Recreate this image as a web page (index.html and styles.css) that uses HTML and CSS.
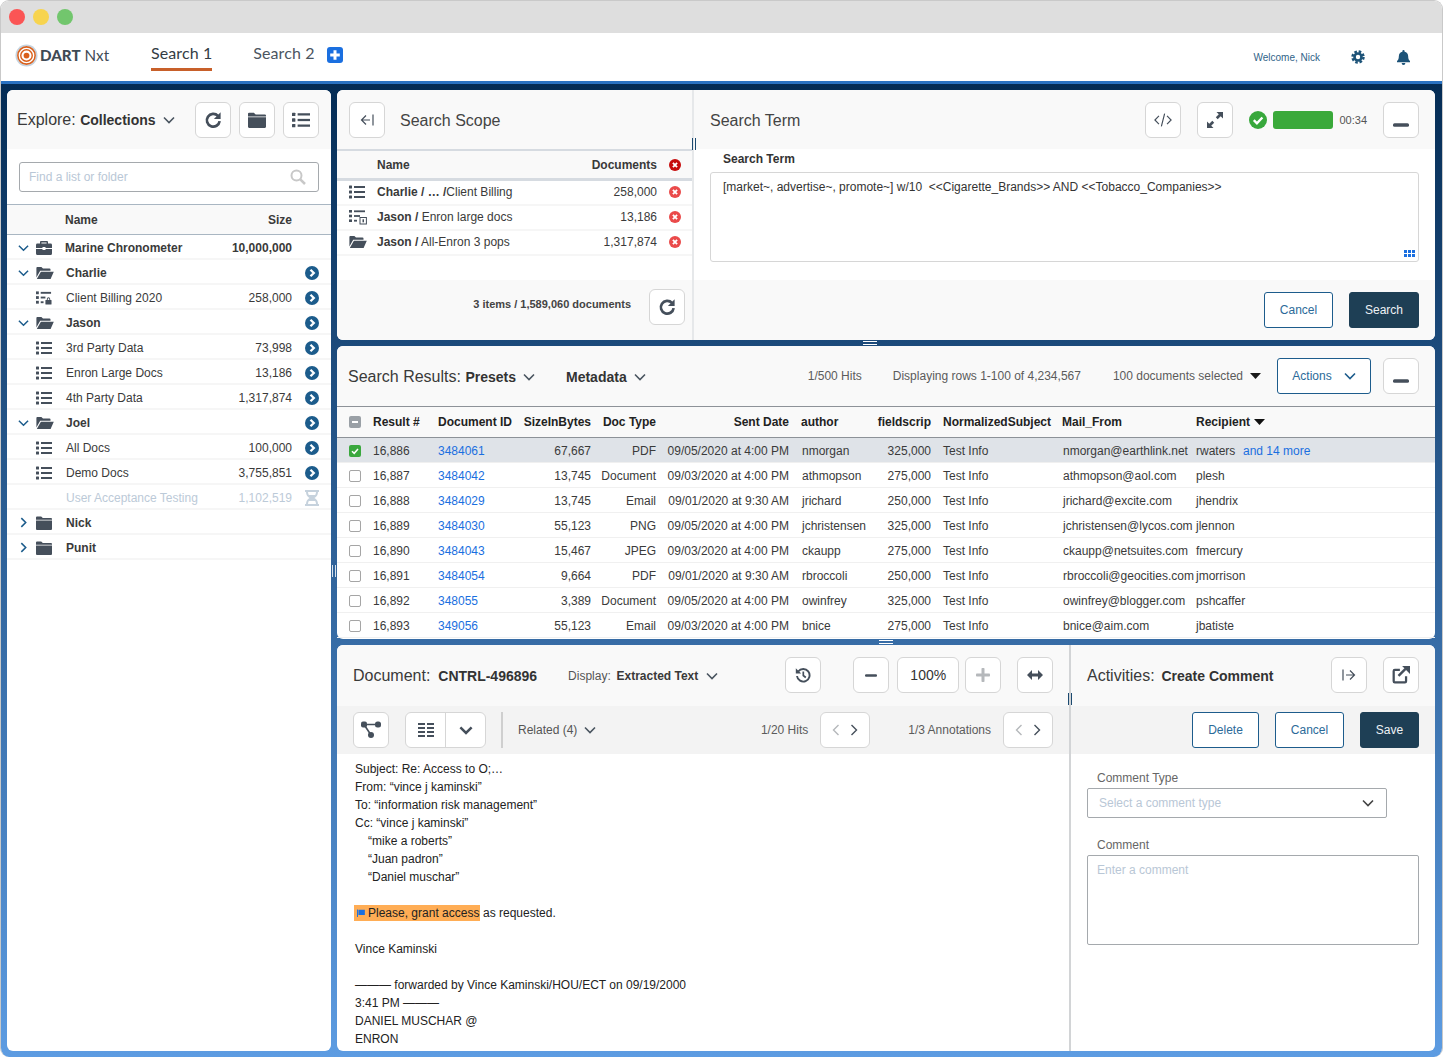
FILE: index.html
```html
<!DOCTYPE html>
<html lang="en">
<head>
<meta charset="utf-8">
<title>DART Nxt</title>
<link rel="stylesheet" href="styles.css">
</head>
<body>
<svg class="sprite" xmlns="http://www.w3.org/2000/svg">
  <symbol id="redo" viewBox="0 0 16 16"><path d="M12.4 4.3A5.700 5.700 0 1 0 13.900 9" fill="none" stroke="currentColor" stroke-width="2.400"/><path d="M14.800 1.200v6h-6z" fill="currentColor"/></symbol>
  <symbol id="list" viewBox="0 0 16 16"><g fill="currentColor"><rect x="0" y="1.500" width="3" height="3" rx=".5"/><rect x="0" y="6.500" width="3" height="3" rx=".5"/><rect x="0" y="11.500" width="3" height="3" rx=".5"/><rect x="5" y="2" width="11" height="2"/><rect x="5" y="7" width="11" height="2"/><rect x="5" y="12" width="11" height="2"/></g></symbol>
  <symbol id="list-lock" viewBox="0 0 17 16"><g fill="currentColor"><rect x="0" y="1" width="3" height="3"/><rect x="0" y="6" width="3" height="3"/><rect x="0" y="11" width="3" height="3"/><rect x="5" y="1.500" width="11" height="2"/><rect x="5" y="6.500" width="5" height="2"/><rect x="5" y="11.500" width="3" height="2"/><rect x="10" y="10" width="6.500" height="5" rx=".6"/><path d="M11.500 10.500V9a1.800 1.800 0 0 1 3.600 0v1.500h-1V9a.8.800 0 0 0-1.600 0v1.500z"/></g></symbol>
  <symbol id="list-query" viewBox="0 0 18 16"><g fill="currentColor"><rect x="0" y="1" width="3" height="2.600"/><rect x="0" y="5.700" width="3" height="2.600"/><rect x="0" y="10.400" width="3" height="2.600"/><rect x="5" y="1.400" width="11" height="1.800"/><rect x="5" y="6.100" width="6" height="1.800"/><rect x="5" y="10.800" width="3" height="1.800"/></g><rect x="11" y="8.500" width="6.400" height="6.500" fill="none" stroke="currentColor"/><rect x="13.500" y="10.300" width="1.500" height="3" fill="currentColor"/></symbol>
  <symbol id="folder" viewBox="0 0 16 16"><path fill="currentColor" d="M1 1.500h4.200L6.800 3H15a1 1 0 0 1 1 1v.8H0V2.500a1 1 0 0 1 1-1zM0 5.600h16V14a1 1 0 0 1-1 1H1a1 1 0 0 1-1-1z"/></symbol>
  <symbol id="folder-open" viewBox="0 0 18 16"><path fill="currentColor" d="M1 2h4.400L7 3.600h6.500a1 1 0 0 1 1 1v1.200H4.200L.4 12.600V3a1 1 0 0 1 .6-1zM4.900 6.800H17.800L14.600 14H.8z"/></symbol>
  <symbol id="briefcase" viewBox="0 0 16 16"><path fill="currentColor" d="M5 1h6a1 1 0 0 1 1 1v1.500h2.600a1.400 1.400 0 0 1 1.400 1.400V8H9.500V7h-3v1H0V4.900a1.400 1.400 0 0 1 1.400-1.400H4V2a1 1 0 0 1 1-1zm.4 1.400V3.500h5.200V2.400zM0 9h6.500v1h3V9H16v4.500a1.500 1.500 0 0 1-1.500 1.500h-13A1.500 1.500 0 0 1 0 13.500z"/></symbol>
  <symbol id="go" viewBox="0 0 14 14"><circle cx="7" cy="7" r="7" fill="#1c5c8c"/><path d="M5.500 3.700 8.800 7l-3.300 3.300" fill="none" stroke="#fff" stroke-width="2.300"/></symbol>
  <symbol id="rm" viewBox="0 0 12 12"><circle cx="6" cy="6" r="6" fill="currentColor"/><path d="M3.900 3.900l4.200 4.200M8.100 3.900l-4.200 4.200" stroke="#fff" stroke-width="1.800"/></symbol>
  <symbol id="hourglass" viewBox="0 0 14 16"><path fill="currentColor" d="M0 0h14v2h-1c0 3-1.500 4.800-3.500 6C11.500 9.200 13 11 13 14h1v2H0v-2h1c0-3 1.500-4.800 3.500-6C2.500 6.800 1 5 1 2H0zm3 2c0 1 .3 2 .8 3h6.400c.5-1 .8-2 .8-3zM3.800 11c-.5 1-.8 2-.8 3h8c0-1-.3-2-.8-3z"/></symbol>
  <symbol id="chev-d" viewBox="0 0 12 8"><path d="M1 1.500l5 5 5-5" fill="none" stroke="currentColor" stroke-width="1.600"/></symbol>
  <symbol id="chev-d2" viewBox="0 0 12 8"><path d="M1 1.200l5 5 5-5" fill="none" stroke="currentColor" stroke-width="2.200"/></symbol>
  <symbol id="chev-r" viewBox="0 0 8 12"><path d="M1.500 1l5 5-5 5" fill="none" stroke="currentColor" stroke-width="1.800"/></symbol>
  <symbol id="ang-l" viewBox="0 0 8 12"><path d="M6.500 1l-5 5 5 5" fill="none" stroke="currentColor" stroke-width="1.400"/></symbol>
  <symbol id="ang-r" viewBox="0 0 8 12"><path d="M1.500 1l5 5-5 5" fill="none" stroke="currentColor" stroke-width="1.400"/></symbol>
  <symbol id="search" viewBox="0 0 16 16"><circle cx="6.500" cy="6.500" r="5" fill="none" stroke="currentColor" stroke-width="2"/><path d="M10.300 10.300 15 15" stroke="currentColor" stroke-width="2.500"/></symbol>
  <symbol id="back" viewBox="0 0 14 12"><path d="M6 1.500 1.500 6 6 10.500M1.500 6H10" fill="none" stroke="currentColor" stroke-width="1.200"/><path d="M13 .5v11" stroke="currentColor" stroke-width="1.200"/></symbol>
  <symbol id="fwd" viewBox="0 0 14 12"><path d="M8 1.500 12.500 6 8 10.500M12.500 6H4" fill="none" stroke="currentColor" stroke-width="1.200"/><path d="M1 .5v11" stroke="currentColor" stroke-width="1.200"/></symbol>
  <symbol id="code" viewBox="0 0 20 16"><path d="M5.500 3.500 1 8l4.500 4.500M14.500 3.500 19 8l-4.500 4.500M11.800 1 8.200 15" fill="none" stroke="currentColor" stroke-width="1.300"/></symbol>
  <symbol id="expand" viewBox="0 0 16 16"><path fill="currentColor" d="M9.500 0H16v6.500l-2.300-2.300-3 3-1.900-1.900 3-3zM0 9.500l2.300 2.300 3-3 1.900 1.900-3 3L6.500 16H0z"/></symbol>
  <symbol id="check" viewBox="0 0 18 18"><circle cx="9" cy="9" r="9" fill="#38a83c"/><path d="M4.800 9.200 7.900 12.300 13.400 6.500" fill="none" stroke="#fff" stroke-width="2.400"/></symbol>
  <symbol id="minus" viewBox="0 0 16 4"><rect width="16" height="3.600" y=".2" rx="1.500" fill="currentColor"/></symbol>
  <symbol id="plus-b" viewBox="0 0 14 14"><rect y="5.500" width="14" height="3" rx=".8" fill="currentColor"/><rect x="5.500" width="3" height="14" rx=".8" fill="currentColor"/></symbol>
  <symbol id="arrows-h" viewBox="0 0 16 10"><path fill="currentColor" d="M5 0v3.500h6V0l5 5-5 5V6.500H5V10L0 5z"/></symbol>
  <symbol id="history" viewBox="0 0 16 16"><path d="M3.200 4.500A6.300 6.300 0 1 1 2 9" fill="none" stroke="currentColor" stroke-width="1.900"/><path d="M.8 1.200 6.200 6.500H.8z" fill="currentColor"/><path d="M8.300 4.500v4l2.500 2" fill="none" stroke="currentColor" stroke-width="1.700"/></symbol>
  <symbol id="graph" viewBox="0 0 20 18"><g fill="currentColor"><rect x="0" y=".5" width="6" height="6" rx="2"/><rect x="14" y=".5" width="6" height="6" rx="2.500"/><circle cx="10" cy="14" r="3"/></g><path d="M3 3.500h14M3 3.500l7 10.500" stroke="currentColor" stroke-width="1.600"/></symbol>
  <symbol id="cols" viewBox="0 0 16 14"><g fill="currentColor"><rect width="7" height="2"/><rect x="9" width="7" height="2"/><rect y="4" width="7" height="2"/><rect x="9" y="4" width="7" height="2"/><rect y="8" width="7" height="2"/><rect x="9" y="8" width="7" height="2"/><rect y="12" width="7" height="2"/><rect x="9" y="12" width="7" height="2"/></g></symbol>
  <symbol id="popout" viewBox="0 0 16 16"><path d="M7 3.500H2.500a1 1 0 0 0-1 1v9a1 1 0 0 0 1 1h9a1 1 0 0 0 1-1V9" fill="none" stroke="currentColor" stroke-width="2"/><path d="M5.800 8.800 12 2.600" stroke="currentColor" stroke-width="2.200"/><path d="M9 0h7v7z" fill="currentColor"/></symbol>
  <symbol id="gear" viewBox="0 0 16 16"><circle cx="8" cy="8" r="6.300" fill="none" stroke="currentColor" stroke-width="2.800" stroke-dasharray="2.900 2.050"/><circle cx="8" cy="8" r="4" fill="none" stroke="currentColor" stroke-width="3"/></symbol>
  <symbol id="bell" viewBox="0 0 14 16"><path fill="currentColor" d="M7 0a1.200 1.200 0 0 1 1.200 1.200v.5C10.500 2.200 12 4 12 6.500c0 3.500 1 4.500 2 5.500v1H0v-1c1-1 2-2 2-5.500C2 4 3.500 2.200 5.800 1.700v-.5A1.200 1.200 0 0 1 7 0zM5 14h4a2 2 0 0 1-4 0z"/></symbol>
  <symbol id="flag" viewBox="0 0 10 10"><path fill="currentColor" d="M0 .5h1.200V10H0zM1.800 1h8v6.500h-8z"/></symbol>
  <symbol id="dots" viewBox="0 0 11 8"><g fill="currentColor"><rect width="3" height="3"/><rect x="4" width="3" height="3"/><rect x="8" width="3" height="3"/><rect y="4" width="3" height="3"/><rect x="4" y="4" width="3" height="3"/><rect x="8" y="4" width="3" height="3"/></g></symbol>
  <symbol id="caret" viewBox="0 0 11 6"><path fill="currentColor" d="M0 0h11L5.500 6z"/></symbol>
  <symbol id="box-check" viewBox="0 0 12 12"><rect width="12" height="12" rx="2" fill="#3aa83e"/><path d="M3 6.200 5.200 8.300 9 4" fill="none" stroke="#fff" stroke-width="1.500"/></symbol>
  <symbol id="box-minus" viewBox="0 0 12 12"><rect width="12" height="12" rx="2" fill="#9aa0a6"/><rect x="3" y="5" width="6" height="2" fill="#fff"/></symbol>
  <symbol id="plus-square" viewBox="0 0 16 16"><rect width="16" height="16" rx="3" fill="#1a6fe0"/><path d="M8 3.200v9.600M3.200 8h9.600" stroke="#fff" stroke-width="3"/></symbol>
  <symbol id="logo" viewBox="0 0 24 24"><circle cx="12" cy="12" r="11.500" fill="#c6d4e0"/><circle cx="12" cy="12" r="9.600" fill="#fff"/><circle cx="12" cy="12" r="9" fill="none" stroke="#d9601c" stroke-width="1.600"/><circle cx="12" cy="12" r="6" fill="none" stroke="#d9601c" stroke-width="1.500"/><circle cx="12" cy="12" r="3" fill="#d9601c"/></symbol>
</svg>

<div class="window">
  <div class="titlebar">
    <span class="light red"></span><span class="light yellow"></span><span class="light green"></span>
  </div>
  <header class="topnav">
    <div class="brand"><svg class="logo"><use href="#logo"/></svg><span class="brand-text"><b>DART</b> Nxt</span></div>
    <a class="tab active">Search 1</a>
    <a class="tab">Search 2</a>
    <svg class="tab-plus"><use href="#plus-square"/></svg>
    <span class="welcome">Welcome, Nick</span>
    <svg class="nav-ic gear"><use href="#gear"/></svg>
    <svg class="nav-ic bell"><use href="#bell"/></svg>
  </header>

  <main class="workspace">
    <section class="panel explore">
      <div class="bar explore-bar">
        <div class="title">Explore: <b>Collections</b><svg class="chev"><use href="#chev-d"/></svg></div>
        <div class="btns">
          <button class="btn"><svg class="i18"><use href="#redo"/></svg></button>
          <button class="btn"><svg class="i18"><use href="#folder"/></svg></button>
          <button class="btn"><svg class="i18"><use href="#list"/></svg></button>
        </div>
      </div>
      <div class="find"><div class="find-box"><span class="ph">Find a list or folder</span><svg class="find-ic"><use href="#search"/></svg></div></div>
      <div class="tree-head tree-row"><span></span><span></span><span>Name</span><span class="r">Size</span><span></span></div>
      <div class="tree-row strong"><svg class="ch-d"><use href="#chev-d"/></svg><svg class="ti"><use href="#briefcase"/></svg><span class="nudge">Marine Chronometer</span><span class="r">10,000,000</span><span></span></div>
      <div class="tree-row strong"><svg class="ch-d"><use href="#chev-d"/></svg><svg class="ti-o"><use href="#folder-open"/></svg><span>Charlie</span><span class="r"></span><svg class="go"><use href="#go"/></svg></div>
      <div class="tree-row"><span></span><svg class="ti"><use href="#list-lock"/></svg><span>Client Billing 2020</span><span class="r">258,000</span><svg class="go"><use href="#go"/></svg></div>
      <div class="tree-row strong"><svg class="ch-d"><use href="#chev-d"/></svg><svg class="ti-o"><use href="#folder-open"/></svg><span>Jason</span><span class="r"></span><svg class="go"><use href="#go"/></svg></div>
      <div class="tree-row"><span></span><svg class="ti"><use href="#list"/></svg><span>3rd Party Data</span><span class="r">73,998</span><svg class="go"><use href="#go"/></svg></div>
      <div class="tree-row"><span></span><svg class="ti"><use href="#list"/></svg><span>Enron Large Docs</span><span class="r">13,186</span><svg class="go"><use href="#go"/></svg></div>
      <div class="tree-row"><span></span><svg class="ti"><use href="#list"/></svg><span>4th Party Data</span><span class="r">1,317,874</span><svg class="go"><use href="#go"/></svg></div>
      <div class="tree-row strong"><svg class="ch-d"><use href="#chev-d"/></svg><svg class="ti-o"><use href="#folder-open"/></svg><span>Joel</span><span class="r"></span><svg class="go"><use href="#go"/></svg></div>
      <div class="tree-row"><span></span><svg class="ti"><use href="#list"/></svg><span>All Docs</span><span class="r">100,000</span><svg class="go"><use href="#go"/></svg></div>
      <div class="tree-row"><span></span><svg class="ti"><use href="#list"/></svg><span>Demo Docs</span><span class="r">3,755,851</span><svg class="go"><use href="#go"/></svg></div>
      <div class="tree-row muted"><span></span><span></span><span>User Acceptance Testing</span><span class="r">1,102,519</span><svg class="go"><use href="#hourglass"/></svg></div>
      <div class="tree-row strong"><svg class="ch-r"><use href="#chev-r"/></svg><svg class="ti"><use href="#folder"/></svg><span>Nick</span><span class="r"></span><span></span></div>
      <div class="tree-row strong"><svg class="ch-r"><use href="#chev-r"/></svg><svg class="ti"><use href="#folder"/></svg><span>Punit</span><span class="r"></span><span></span></div>
      <i class="grip-v grip-explore"></i>
    </section>

    <div class="stack">
      <section class="panel search">
        <div class="scope">
          <div class="bar scope-bar">
            <button class="btn"><svg class="i14"><use href="#back"/></svg></button>
            <div class="title plain">Search Scope</div>
          </div>
          <div class="scope-row scope-head"><span></span><span>Name</span><span class="r">Documents</span><svg class="rm dark"><use href="#rm"/></svg></div>
          <div class="scope-row"><svg class="si"><use href="#list"/></svg><span><b>Charlie / … /</b>Client Billing</span><span class="r">258,000</span><svg class="rm"><use href="#rm"/></svg></div>
          <div class="scope-row"><svg class="si-w"><use href="#list-query"/></svg><span><b>Jason /</b> Enron large docs</span><span class="r">13,186</span><svg class="rm"><use href="#rm"/></svg></div>
          <div class="scope-row"><svg class="si-w"><use href="#folder-open"/></svg><span><b>Jason /</b> All-Enron 3 pops</span><span class="r">1,317,874</span><svg class="rm"><use href="#rm"/></svg></div>
          <div class="foot scope-foot">
            <span class="count">3 items / 1,589,060 documents</span>
            <button class="btn"><svg class="i18"><use href="#redo"/></svg></button>
          </div>
        </div>
        <div class="term">
          <div class="bar term-bar">
            <div class="title plain">Search Term</div>
            <button class="btn push"><svg class="i18"><use href="#code"/></svg></button>
            <button class="btn"><svg class="i16"><use href="#expand"/></svg></button>
            <svg class="ok"><use href="#check"/></svg>
            <span class="progress"></span>
            <span class="timer">00:34</span>
            <button class="btn"><svg class="minus"><use href="#minus"/></svg></button>
          </div>
          <div class="term-body">
            <label class="term-label">Search Term</label>
            <div class="term-box">[market~, advertise~, promote~] w/10 &nbsp;&lt;&lt;Cigarette_Brands&gt;&gt; AND &lt;&lt;Tobacco_Companies&gt;&gt;<svg class="dots"><use href="#dots"/></svg></div>
          </div>
          <div class="foot term-foot">
            <button class="act outline">Cancel</button>
            <button class="act solid">Search</button>
          </div>
        </div>
        <i class="grip-v grip-scope"></i>
      </section>

      <section class="panel results">
        <i class="grip-h grip-top"></i>
        <div class="bar res-bar">
          <div class="title res-title">Search Results: <b>Presets</b><svg class="chev"><use href="#chev-d"/></svg></div>
          <div class="meta-pick"><b>Metadata</b><svg class="chev"><use href="#chev-d"/></svg></div>
          <span class="stat hits">1/500 Hits</span>
          <span class="stat disp">Displaying rows 1-100 of 4,234,567</span>
          <span class="stat sel">100 documents selected</span>
          <svg class="caret"><use href="#caret"/></svg>
          <button class="act outline actions">Actions<svg class="chev chev-blue"><use href="#chev-d"/></svg></button>
          <button class="btn"><svg class="minus"><use href="#minus"/></svg></button>
        </div>
        <div class="grid-row grid-head">
          <svg class="cb"><use href="#box-minus"/></svg><span>Result #</span><span>Document ID</span><span class="r">SizeInBytes</span><span class="r">Doc Type</span><span class="r">Sent Date</span><span>author</span><span class="r">fieldscrip</span><span>NormalizedSubject</span><span>Mail_From</span><span>Recipient <svg class="caret-s"><use href="#caret"/></svg></span>
        </div>
        <div class="grid-row picked"><svg class="cb"><use href="#box-check"/></svg><span>16,886</span><a class="lnk">3484061</a><span class="r">67,667</span><span class="r">PDF</span><span class="r">09/05/2020 at 4:00 PM</span><span class="d1">nmorgan</span><span class="r">325,000</span><span>Test Info</span><span class="d1">nmorgan@earthlink.net</span><span>rwaters &nbsp;<a class="lnk more">and 14 more</a></span></div>
        <div class="grid-row"><span class="box"></span><span>16,887</span><a class="lnk">3484042</a><span class="r">13,745</span><span class="r">Document</span><span class="r">09/03/2020 at 4:00 PM</span><span class="d1">athmopson</span><span class="r">275,000</span><span>Test Info</span><span class="d1">athmopson@aol.com</span><span>plesh</span></div>
        <div class="grid-row"><span class="box"></span><span>16,888</span><a class="lnk">3484029</a><span class="r">13,745</span><span class="r">Email</span><span class="r">09/01/2020 at 9:30 AM</span><span class="d1">jrichard</span><span class="r">250,000</span><span>Test Info</span><span class="d1">jrichard@excite.com</span><span>jhendrix</span></div>
        <div class="grid-row"><span class="box"></span><span>16,889</span><a class="lnk">3484030</a><span class="r">55,123</span><span class="r">PNG</span><span class="r">09/05/2020 at 4:00 PM</span><span class="d1">jchristensen</span><span class="r">325,000</span><span>Test Info</span><span class="d1">jchristensen@lycos.com</span><span>jlennon</span></div>
        <div class="grid-row"><span class="box"></span><span>16,890</span><a class="lnk">3484043</a><span class="r">15,467</span><span class="r">JPEG</span><span class="r">09/03/2020 at 4:00 PM</span><span class="d1">ckaupp</span><span class="r">275,000</span><span>Test Info</span><span class="d1">ckaupp@netsuites.com</span><span>fmercury</span></div>
        <div class="grid-row"><span class="box"></span><span>16,891</span><a class="lnk">3484054</a><span class="r">9,664</span><span class="r">PDF</span><span class="r">09/01/2020 at 9:30 AM</span><span class="d1">rbroccoli</span><span class="r">250,000</span><span>Test Info</span><span class="d1">rbroccoli@geocities.com</span><span>jmorrison</span></div>
        <div class="grid-row"><span class="box"></span><span>16,892</span><a class="lnk">348055</a><span class="r">3,389</span><span class="r">Document</span><span class="r">09/05/2020 at 4:00 PM</span><span class="d1">owinfrey</span><span class="r">325,000</span><span>Test Info</span><span class="d1">owinfrey@blogger.com</span><span>pshcaffer</span></div>
        <div class="grid-row"><span class="box"></span><span>16,893</span><a class="lnk">349056</a><span class="r">55,123</span><span class="r">Email</span><span class="r">09/03/2020 at 4:00 PM</span><span class="d1">bnice</span><span class="r">275,000</span><span>Test Info</span><span class="d1">bnice@aim.com</span><span>jbatiste</span></div>
        <i class="grip-h grip-bottom"></i>
      </section>

      <section class="panel document">
        <div class="doc">
          <div class="bar doc-bar">
            <div class="title doc-title">Document: &nbsp;<b>CNTRL-496896</b></div>
            <div class="display">Display: &nbsp;<b>Extracted Text</b><svg class="chev"><use href="#chev-d"/></svg></div>
            <button class="btn history"><svg class="i16"><use href="#history"/></svg></button>
            <button class="btn zoom-minus"><svg class="i14m"><use href="#minus"/></svg></button>
            <span class="btn pct">100%</span>
            <button class="btn"><svg class="i14 faint"><use href="#plus-b"/></svg></button>
            <button class="btn fit"><svg class="i16h"><use href="#arrows-h"/></svg></button>
          </div>
          <div class="toolbar">
            <button class="btn"><svg class="i20"><use href="#graph"/></svg></button>
            <div class="split"><span class="seg seg-l"><svg class="i16c"><use href="#cols"/></svg></span><span class="seg seg-r"><svg class="chev-b"><use href="#chev-d2"/></svg></span></div>
            <i class="vsep"></i>
            <div class="related">Related (4)<svg class="chev"><use href="#chev-d"/></svg></div>
            <span class="nav-label hits-l">1/20 Hits</span>
            <div class="pager"><svg class="ang faint"><use href="#ang-l"/></svg><svg class="ang"><use href="#ang-r"/></svg></div>
            <span class="nav-label ann-l">1/3 Annotations</span>
            <div class="pager"><svg class="ang faint"><use href="#ang-l"/></svg><svg class="ang"><use href="#ang-r"/></svg></div>
          </div>
          <div class="doc-text">
            <div class="ln">Subject: Re: Access to O;…</div>
            <div class="ln">From: “vince j kaminski”</div>
            <div class="ln">To: “information risk management”</div>
            <div class="ln">Cc: “vince j kaminski”</div>
            <div class="ln ind">“mike a roberts”</div>
            <div class="ln ind">“Juan padron”</div>
            <div class="ln ind">“Daniel muschar”</div>
            <div class="ln"></div>
            <div class="ln hl-line"><mark class="hl"><svg class="flag"><use href="#flag"/></svg><span>Please, grant access</span></mark><span class="after">as requested.</span></div>
            <div class="ln"></div>
            <div class="ln">Vince Kaminski</div>
            <div class="ln"></div>
            <div class="ln">——— forwarded by Vince Kaminski/HOU/ECT on 09/19/2000</div>
            <div class="ln">3:41 PM ———</div>
            <div class="ln">DANIEL MUSCHAR @</div>
            <div class="ln">ENRON</div>
          </div>
        </div>
        <div class="activity">
          <div class="bar act-bar">
            <div class="title act-title">Activities: &nbsp;<b>Create Comment</b></div>
            <button class="btn push"><svg class="i14"><use href="#fwd"/></svg></button>
            <button class="btn"><svg class="i18"><use href="#popout"/></svg></button>
          </div>
          <div class="act-tools">
            <button class="act outline">Delete</button>
            <button class="act outline">Cancel</button>
            <button class="act solid">Save</button>
          </div>
          <div class="form">
            <label class="f-label">Comment Type</label>
            <div class="select"><span class="ph">Select a comment type</span><svg class="chev dark-chev"><use href="#chev-d"/></svg></div>
            <label class="f-label second">Comment</label>
            <div class="comment"><span class="ph">Enter a comment</span></div>
          </div>
        </div>
        <i class="grip-v grip-doc"></i>
      </section>
    </div>
  </main>
</div>
</body>
</html>
```

FILE: styles.css
```css
* { box-sizing: border-box; }
html, body { margin: 0; padding: 0; background: #fff; height: 100%; overflow: hidden; }
body { font-family: "Liberation Sans", Arial, sans-serif; font-size: 12px; color: #3a3a3a; }
.sprite { display: none; }
svg { display: block; flex: none; }
b { font-weight: 700; }

.window { width: 1443px; height: 1057px; border: 1px solid #c9c9c9; border-bottom: 0; border-radius: 9px 9px 9px 9px; overflow: hidden; display: flex; flex-direction: column; }
.titlebar { height: 32px; background: #dedede; display: flex; align-items: center; gap: 8px; padding: 0 0 0 8px; flex: none; }
.light { width: 16px; height: 16px; border-radius: 50%; }
.red { background: #fb5555; }
.yellow { background: #f7d44f; }
.green { background: #72c66d; }

.topnav { height: 51px; flex: none; background: #fff; border-bottom: 3px solid #2a72c2; display: flex; align-items: center; padding: 0 0 0 14px; font-family: Lato, sans-serif; }
.brand { display: flex; align-items: center; gap: 2px; width: 136px; margin-bottom: 4px; }
.logo { width: 23px; height: 23px; }
.brand-text { font-size: 15.2px; color: #3f4a55; }
.brand-text b { font-weight: 900; }
.tab { font-size: 16px; letter-spacing: .1px; color: #4b555f; height: 31px; line-height: 26px; margin-bottom: 3px; margin-right: 41px; }
.tab.active { color: #333c44; border-bottom: 3px solid #c8602a; }
.tab-plus { width: 16px; height: 16px; margin-left: -29px; margin-bottom: 4px; }
.welcome { margin-left: auto; font-family: "Liberation Sans", sans-serif; font-size: 10px; color: #2f6388; }
.nav-ic { color: #1d5378; }
.gear { width: 14px; height: 14px; margin-left: 31px; }
.bell { width: 13px; height: 15px; margin-left: 32px; margin-right: 32px; }

.workspace { flex: 1; min-height: 0; display: grid; grid-template-columns: 324px 1098px; gap: 6px; padding: 6px 6px 6px; background: linear-gradient(180deg, #042c55 0%, #5d9ce2 100%); }
.panel { background: #fff; border-radius: 6px; position: relative; }
.stack { display: grid; grid-template-rows: 250px 293px 406px; gap: 6px; min-height: 0; }
.bar { background: #f9f9f9; display: flex; align-items: center; flex: none; }
.title { font-size: 16px; color: #3a3a3a; display: flex; align-items: center; white-space: pre; }
.title b { font-size: 14px; color: #333; }
.title.plain { color: #444; margin-top: 2px; }
.res-title, .doc-title, .act-title { margin-top: 2px; }
.doc-title b { margin-left: -1px; }
.act-title b { margin-left: -2px; }
.chev { width: 12px; height: 8px; margin-left: 7px; color: #4a5560; }
.r { text-align: right; }
.ph { color: #b9c7d6; }

.btn { width: 36px; height: 36px; padding: 0; background: #fff; border: 1px solid #d6d6d6; border-radius: 6px; display: inline-flex; align-items: center; justify-content: center; color: #454f5b; flex: none; font: inherit; }
.i18 { width: 18px; height: 18px; }
.i16 { width: 16px; height: 16px; }
.i14 { width: 14px; height: 14px; }
.i14m { width: 12px; height: 3px; }
.i16h { width: 16px; height: 10px; }
.i20 { width: 20px; height: 18px; }
.i16c { width: 16px; height: 14px; }
.minus { width: 16px; height: 4px; margin-top: 10px; }
.faint { color: #b5b8bb; }
.push { margin-left: auto; }

.act { height: 36px; border-radius: 3px; font: 12px "Liberation Sans", sans-serif; padding: 0; display: inline-flex; align-items: center; justify-content: center; }
.act.outline { background: #fff; border: 1px solid #1d5c8c; color: #2b6a99; }
.act.solid { background: #1e3f55; border: 1px solid #1e3f55; color: #eef2f5; }

/* explore */
.explore-bar { height: 59px; padding: 0 12px 0 10px; justify-content: space-between; border-radius: 6px 6px 0 0; }
.explore-bar .chev { margin-left: 7px; }
.btns { display: flex; gap: 8px; }
.find { height: 55px; padding: 13px 12px 0; }
.find-box { height: 30px; border: 1px solid #a5a9ad; border-radius: 3px; display: flex; align-items: center; justify-content: space-between; padding: 0 12px 0 9px; }
.find-ic { width: 16px; height: 16px; color: #c8c8c8; }
.tree-row { height: 25px; padding-top: 2px; display: grid; grid-template-columns: 29px 30px 146px 80px 39px; align-items: center; border-bottom: 2px solid #f6f6f6; }
.tree-row > span { white-space: nowrap; }
.tree-head { height: 31px; padding-top: 0; background: #f9f9f9; border-top: 1px solid #a9b6c2; border-bottom: 1px solid #a9b6c2; font-weight: 700; color: #3a3a3a; }
.strong { font-weight: 700; }
.nudge { margin-left: -1px; }
.tree-head span:nth-child(3) { margin-left: -1px; }
.muted { color: #bccad8; }
.muted .go { color: #c6d2dd; width: 14px; height: 16px; }
.ch-d { width: 11px; height: 8px; margin-left: 11px; color: #1c5c8c; }
.ch-r { width: 7px; height: 11px; margin-left: 13px; color: #1c5c8c; }
.ti { width: 16px; height: 16px; color: #454f5b; }
.ti-o { width: 18px; height: 16px; color: #454f5b; }
.go { width: 14px; height: 14px; margin-left: 13px; }

/* grips */
.grip-v { position: absolute; width: 4px; height: 12px; border-left: 1px solid #1c4a70; border-right: 1px solid #1c4a70; }
.grip-h { position: absolute; width: 14px; height: 4px; border-top: 1px solid #fff; border-bottom: 1px solid #fff; }
.grip-explore { left: 325px; top: 475px; border-color: #d8e2ec; }
.grip-scope { left: 355px; top: 48px; }
.grip-top { left: 526px; top: -5px; }
.grip-bottom { left: 542px; top: 294px; }
.grip-doc { left: 731px; top: 48px; }

/* search */
.search { display: grid; grid-template-columns: 357px 1fr; }
.scope { display: flex; flex-direction: column; border-right: 2px solid #e6e8ea; }
.scope-bar { height: 59px; padding: 0 12px; gap: 15px; border-radius: 6px 0 0 0; }
.scope-row { height: 25px; padding-bottom: 1px; display: grid; grid-template-columns: 40px 190px 90px 24px; align-items: center; border-bottom: 2px solid #f6f6f6; white-space: nowrap; }
.scope-head { height: 32px; padding-bottom: 0; background: #f9f9f9; border-top: 2px solid #d6dbe1; border-bottom: 3px solid #d6dbe1; font-weight: 700; }
.si { width: 16px; height: 16px; margin-left: 12px; color: #454f5b; }
.si-w { width: 18px; height: 16px; margin-left: 12px; color: #454f5b; }
.rm { width: 12px; height: 12px; margin-left: 12px; color: #ea4a4a; }
.rm.dark { color: #c60c0c; }
.foot { height: 60px; background: #f9f9f9; display: flex; align-items: center; flex: none; border-radius: 0 0 6px 6px; }
.scope-foot { margin-top: auto; justify-content: flex-end; padding: 0 7px 6px 0; gap: 18px; border-radius: 0 0 0 6px; }
.count { font-size: 11px; font-weight: 700; color: #444; margin-bottom: 6px; }
.term { display: flex; flex-direction: column; min-width: 0; }
.term-bar { height: 59px; padding: 0 16px; border-radius: 0 6px 0 0; }
.term-bar .btn + .btn { margin-left: 16px; }
.ok { width: 18px; height: 18px; margin-left: 16px; }
.progress { width: 60px; height: 18px; background: #3aa93a; border-radius: 3px; margin-left: 6px; }
.timer { font-size: 11px; color: #555; margin: 0 16px 0 6px; }
.term-body { flex: 1; padding: 3px 16px 0; }
.term-label { display: block; font-weight: 700; color: #333; padding-left: 13px; height: 20px; line-height: 15px; }
.term-box { height: 90px; border: 1px solid #d6d6d6; border-radius: 3px; padding: 7px 12px; position: relative; color: #333; }
.dots { position: absolute; right: 3px; bottom: 3px; width: 11px; height: 8px; color: #1a6fe0; }
.term-foot { justify-content: flex-end; gap: 16px; padding: 0 16px; border-radius: 0 0 6px 0; }
.term-foot .outline { width: 69px; }
.term-foot .solid { width: 70px; }

/* results */
.results { display: flex; flex-direction: column; }
.res-bar { height: 60px; padding: 0 16px 0 11px; border-radius: 6px 6px 0 0; }
.meta-pick { font-size: 14px; display: flex; align-items: center; color: #333; margin-left: 31px; margin-top: 2px; }
.stat { color: #5b5b5b; white-space: nowrap; }
.hits { margin-left: auto; }
.disp { margin-left: 31px; }
.sel { margin-left: 32px; }
.caret { width: 11px; height: 6px; margin-left: 7px; color: #1a1a1a; }
.res-bar .actions { width: 94px; height: 36px; margin-left: 16px; gap: 12px; }
.chev-blue { color: #1d5c8c; margin-left: 0; }
.res-bar .btn { margin-left: 12px; }
.grid-row { height: 25px; padding-top: 1px; display: grid; grid-template-columns: 36px 65px 87px 66px 65px 133px 12px 77px 53px 12px 119px 134px 1fr; align-items: center; border-bottom: 1px solid #f0f0f0; white-space: nowrap; }
.grid-row > :nth-child(7) { grid-column: 8; }
.grid-row > :nth-child(8) { grid-column: 9; }
.grid-row > :nth-child(9) { grid-column: 11; }
.grid-row > :nth-child(10) { grid-column: 12; }
.grid-row > :nth-child(11) { grid-column: 13; }
.grid-head { height: 32px; padding-top: 0; background: #f9f9f9; border-top: 1px solid #8d9298; border-bottom: 1px solid #8d9298; font-weight: 700; color: #222; }
.grid-head > span { display: flex; align-items: center; gap: 4px; }
.grid-head > .r { justify-content: flex-end; }
.picked { background: #dfe3e8; }
.d1 { padding-left: 1px; }
.cb { width: 12px; height: 12px; margin-left: 12px; }
.box { width: 12px; height: 12px; margin-left: 12px; border: 1px solid #a5a5a5; border-radius: 2px; background: #fff; }
.lnk { color: #1a6fe0; }
.more { margin-left: 1px; }
.caret-s { width: 11px; height: 6px; color: #111; }

/* document */
.document { display: grid; grid-template-columns: 734px 1fr; }
.doc { border-right: 2px solid #d2d4d6; display: flex; flex-direction: column; min-width: 0; }
.doc-bar { height: 61px; padding: 0 16px 1px; border-radius: 6px 0 0 0; }
.doc-bar .btn { margin-left: 8px; }
.display { display: flex; align-items: center; color: #555; margin-left: 31px; margin-top: 2px; white-space: pre; }
.display b { color: #3a3a3a; margin-left: -1px; }
.display .chev { margin-left: 8px; }
.doc-bar .history { margin-left: 67px; }
.doc-bar .zoom-minus { margin-left: 32px; }
.pct { width: 62px; font-size: 14px; color: #333; }
.doc-bar .pct + .btn { margin-left: 6px; }
.doc-bar .fit { margin-left: 16px; }
.toolbar { height: 48px; background: #f3f3f3; display: flex; align-items: center; padding: 0 16px; flex: none; }
.split { width: 81px; height: 36px; margin-left: 16px; background: #fff; border: 1px solid #d6d6d6; border-radius: 6px; display: flex; }
.seg { display: flex; align-items: center; justify-content: center; color: #454f5b; }
.seg-l { width: 40px; border-right: 1px solid #d6d6d6; }
.seg-r { flex: 1; }
.chev-b { width: 14px; height: 9px; }
.vsep { width: 2px; height: 36px; background: #cfcfcf; margin-left: 15px; }
.related { display: flex; align-items: center; margin-left: 15px; color: #555; }
.nav-label { color: #5b5b5b; white-space: nowrap; }
.hits-l { margin-left: auto; margin-right: 12px; }
.ann-l { margin-left: 38px; margin-right: 12px; }
.pager { width: 50px; height: 36px; background: #fff; border: 1px solid #d6d6d6; border-radius: 6px; display: flex; align-items: center; justify-content: center; gap: 10px; color: #454f5b; flex: none; }
.ang { width: 8px; height: 12px; }
.doc-text { padding: 6px 18px 0; color: #222; overflow: hidden; flex: 1; border-radius: 0 0 0 6px; }
.ln { height: 18px; line-height: 18px; white-space: nowrap; }
.ind { padding-left: 13px; }
.hl-line { display: flex; align-items: center; }
.hl { background: #ffad55; color: #222; display: flex; align-items: center; height: 16px; padding-left: 3px; margin-left: -1px; width: 126px; }
.flag { width: 8px; height: 8px; color: #1a6fe0; margin-right: 3px; }
.after { margin-left: 3px; }

.activity { display: flex; flex-direction: column; min-width: 0; }
.act-bar { height: 61px; padding: 0 16px 1px; border-radius: 0 6px 0 0; }
.act-bar .btn + .btn { margin-left: 16px; }
.act-tools { height: 48px; background: #f3f3f3; display: flex; justify-content: flex-end; align-items: center; gap: 16px; padding: 0 16px 1px; flex: none; }
.act-tools .outline:nth-child(1) { width: 67px; }
.act-tools .outline:nth-child(2) { width: 69px; }
.act-tools .solid { width: 59px; }
.form { padding: 17px 16px 0; display: flex; flex-direction: column; }
.f-label { color: #666; height: 17px; line-height: 14px; padding-left: 10px; }
.f-label.second { margin-top: 20px; height: 17px; }
.select { width: 300px; height: 30px; border: 1px solid #a5a9ad; border-radius: 2px; display: flex; align-items: center; justify-content: space-between; padding: 0 12px 0 11px; }
.dark-chev { color: #444; }
.comment { height: 90px; border: 1px solid #a5a9ad; border-radius: 2px; padding: 7px 9px; }
```
